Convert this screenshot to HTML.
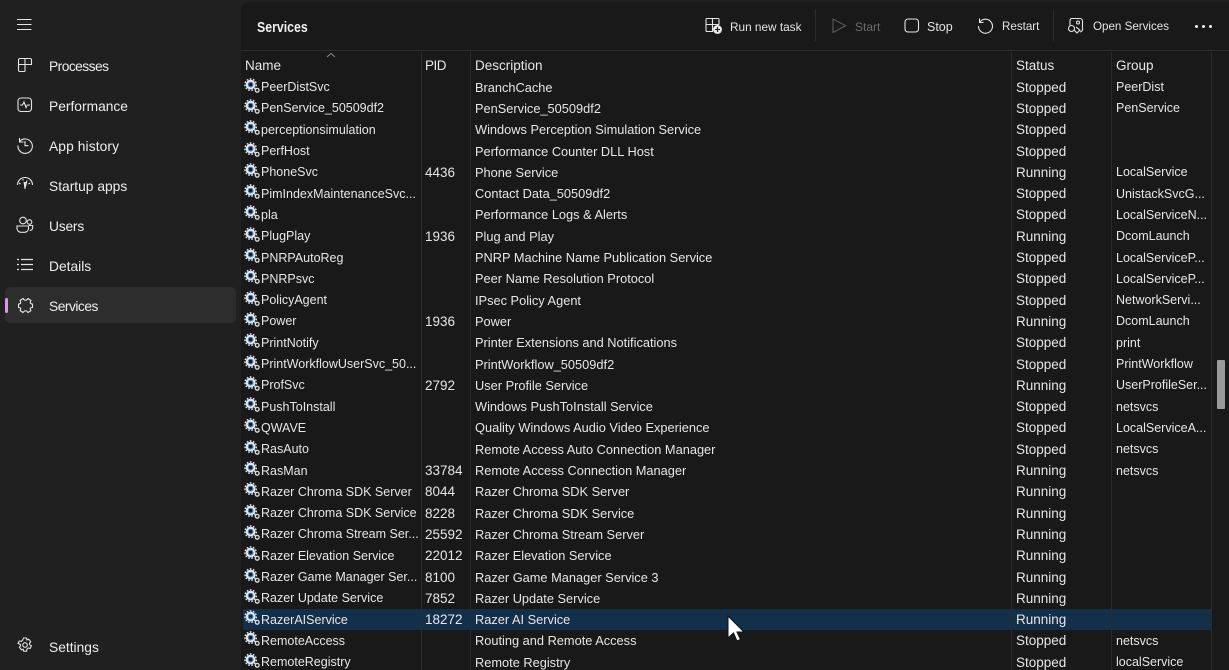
<!DOCTYPE html>
<html><head><meta charset="utf-8"><style>
html,body{margin:0;padding:0;width:1229px;height:670px;overflow:hidden;background:#202020;color:#e6e6e6;font-family:"Liberation Sans",sans-serif;font-size:13.5px}
.abs,.nav,.tb,.ic{position:absolute}
#main{position:absolute;left:241px;top:2px;width:988px;height:668px;background:#191919;border-top-left-radius:8px;overflow:hidden}
.nav{left:49px;font-size:13.800px;color:#eee;line-height:20px;white-space:nowrap;margin-top:1px}
.ic{fill:none;stroke:#e4e4e4;stroke-width:1.1}
.tb{top:16.500px;line-height:20px;white-space:nowrap;font-size:12px;color:#e4e4e4}
#rows{position:absolute;left:241px;top:76.700px;width:970px;height:593.300px;overflow:hidden}
.r{position:relative;height:21.3px;line-height:21.3px;white-space:nowrap}
.r span{position:absolute;top:0;white-space:nowrap}
.r svg{position:absolute;left:3px;top:0}
.n{font-size:12.500px}.d{font-size:12.800px}.g{font-size:12.500px}
.r span.n,.r span.g{top:.5px}
.n{left:20px}.p{left:184px}.d{left:234px}.s{left:775px}.g{left:875px}
.sel{background:linear-gradient(#12304a,#12304a) 2px 0/968px 100% no-repeat}
.sep{position:absolute;width:1px;background:#2b2b2b}
.hd{position:absolute;top:56px;line-height:20px;color:#e6e6e6}
</style></head><body>
<svg width="0" height="0" style="position:absolute"><symbol id="gg" viewBox="0 0 18 18"><g fill="none" stroke="#dfeaf5" stroke-width="2.2"><circle cx="7" cy="7" r="4"/></g><g fill="none" stroke="#dfeaf5" stroke-width="1.5" stroke-dasharray="1.8 1.6"><circle cx="7" cy="7" r="6"/></g><circle cx="7" cy="7" r="2.3" fill="none" stroke="#3f86c8" stroke-width="1"/><circle cx="14" cy="13" r="2" fill="none" stroke="#d5dde5" stroke-width="1.4"/></symbol></svg>

<svg class="ic" style="left:16px;top:18px" width="17" height="13"><path d="M1 1.5h14.5M1 6.500h14.500M1 11.500h14.500"/></svg>
<svg class="ic" style="left:17px;top:57px" width="16" height="16"><path d="M1.500 3a1.500 1.500 0 0 1 1.500-1.500h10a1.500 1.500 0 0 1 1.500 1.500v4.500H1.500zM8 1.500v13M1.500 7.500v5.500a1.500 1.500 0 0 0 1.500 1.500h5"/></svg>
<div class="nav" style="top:56px;letter-spacing:-.55px">Processes</div>
<svg class="ic" style="left:17px;top:97px" width="16" height="16"><rect x="1" y="1" width="13.500" height="13.500" rx="3"/><path d="M3 8h2.500l1.500-3 2 5.500 1.200-2.500H13"/></svg>
<div class="nav" style="top:96px">Performance</div>
<svg class="ic" style="left:16px;top:136px" width="18" height="18"><path d="M3.500 2v4h4M3.700 5.500A7.200 7.200 0 1 1 2 9.500M9 5v4.700h3.500"/></svg>
<div class="nav" style="top:136px;letter-spacing:.1px">App history</div>
<svg class="ic" style="left:16px;top:177px" width="18" height="14"><path d="M1.500 8A7.500 7.500 0 0 1 16.500 8M3 6l1.500 1M7 2v1.500M14 6l-1.500 1M11 3.500 8.800 12"/><path d="M7.500 5 10.500 5 9.500 11.500 8.500 11.500Z" fill="#e4e4e4" stroke="none"/></svg>
<div class="nav" style="top:176px">Startup apps</div>
<svg class="ic" style="left:16px;top:216px" width="18" height="18"><circle cx="7" cy="4.500" r="3.300"/><circle cx="13.500" cy="6" r="2.300"/><path d="M1 10h11.500v2.500a4 4 0 0 1-4 3.800H5a4 4 0 0 1-4-3.800zM13 9.500h3.700v2a3 3 0 0 1-3 3"/></svg>
<div class="nav" style="top:216px;letter-spacing:-.2px">Users</div>
<svg class="ic" style="left:16px;top:258px" width="18" height="15"><path d="M5 1.500h12M5 6.500h12M5 11.500h12M1 1.500h2M1 6.500h2M1 11.500h2" stroke-width="1.200"/></svg>
<div class="nav" style="top:256px">Details</div>
<div class="abs" style="left:5px;top:287px;width:231px;height:36px;background:#2d2d2d;border-radius:5px"></div>
<div class="abs" style="left:5px;top:298px;width:3px;height:15px;background:#d59ae0;border-radius:2px"></div>
<svg class="ic" style="left:17px;top:297px;stroke-linejoin:round" width="17" height="17"><path d="M6 1.500Q8.500 5 11 1.500L14 3.500Q12 7 15.500 7L15.500 10.500Q12 10.500 14 13.500L11 15.500Q8.500 12 6 15.500L3 13.500Q5 10.500 1.500 10.500L1.500 7Q5 7 3 3.500Z"/></svg>
<div class="nav" style="top:296px;letter-spacing:-.5px">Services</div>
<svg class="ic" style="left:17px;top:637px" width="16" height="16"><circle cx="8" cy="8" r="2.300"/><path d="M6.500 1h3l.4 2 1.800-.8 2 2.600-1.300 1.500.3 1.500 1.700 1-1.300 2.700-2-.5-1.200 1.200-.3 2h-3l-.5-2-1.700.6-2-2.500 1.200-1.400-.3-1.600L1 6.500 2.300 4l2 .4L5.800 3z"/></svg>
<div class="nav" style="top:637px">Settings</div>

<div id="main"></div>
<div class="abs" style="left:241px;top:50px;width:988px;height:1px;background:#2e2e2e"></div>
<div class="abs" style="left:257px;top:17.500px;font-size:14.500px;line-height:20px;font-weight:bold;color:#f0f0f0;transform:scaleX(.85);transform-origin:left">Services</div>

<svg class="ic" style="left:705px;top:17px" width="18" height="18"><path d="M2 1.500h11a1 1 0 0 1 1 1v5M1 2.500a1 1 0 0 1 1-1M1 2.500v11a1 1 0 0 0 1 1h6M1 7.500h13M7.500 1.500v13"/><circle cx="12.500" cy="12.500" r="4.500" fill="#e8e8e8" stroke="none"/><path d="M12.500 10v5M10 12.500h5" stroke="#191919"/></svg>
<div class="tb" style="left:730px;font-size:11.800px">Run new task</div>
<div class="abs" style="left:815px;top:9px;width:1px;height:32px;background:#2c2c2c"></div>
<svg class="ic" style="left:831px;top:17px;stroke:#5a5a5a" width="16" height="18"><path d="M2 2v13.500L14.500 8.700z"/></svg>
<div class="tb" style="left:855px;color:#6a6a6a">Start</div>
<svg class="ic" style="left:904px;top:18px" width="16" height="15"><rect x="1" y="1" width="13.500" height="13" rx="3"/></svg>
<div class="tb" style="left:927px;font-size:12.500px">Stop</div>
<svg class="ic" style="left:977px;top:17px" width="17" height="17"><path d="M2.500 1.500v4h4M2.700 5.300A7 7 0 1 1 1.500 9"/></svg>
<div class="tb" style="left:1002px;font-size:11.600px">Restart</div>
<div class="abs" style="left:1053px;top:9px;width:1px;height:32px;background:#2c2c2c"></div>
<svg class="ic" style="left:1067px;top:17px" width="18" height="18"><path d="M3 9V3.500A2 2 0 0 1 5 1.500h8a2.500 2.500 0 0 1 2.500 2.500v7a3 3 0 0 1-2.500 4"/><circle cx="4.500" cy="11.500" r="3"/><circle cx="11" cy="5.500" r="1.500"/><path d="M7 13l3 3 3-3-4-3"/></svg>
<div class="tb" style="left:1093px;font-size:11.600px">Open Services</div>
<div class="abs" style="left:1195px;top:25px;width:3px;height:3px;background:#eee;border-radius:50%;box-shadow:7px 0 #eee,14px 0 #eee"></div>

<svg class="abs" style="left:326px;top:52px" width="10" height="6"><path d="M1 5l4-3.500L9 5" fill="none" stroke="#8a8a8a"/></svg>
<div class="hd" style="left:245px">Name</div>
<div class="hd" style="left:425px;letter-spacing:-.5px">PID</div>
<div class="hd" style="left:475px">Description</div>
<div class="hd" style="left:1016px">Status</div>
<div class="hd" style="left:1116px">Group</div>

<div id="rows">
<div class="r"><svg width="17" height="17" style="top:1px"><use href="#gg"/></svg><span class="n">PeerDistSvc</span><span class="d">BranchCache</span><span class="s">Stopped</span><span class="g">PeerDist</span></div>
<div class="r"><svg width="17" height="17" style="top:1px"><use href="#gg"/></svg><span class="n">PenService_50509df2</span><span class="d">PenService_50509df2</span><span class="s">Stopped</span><span class="g">PenService</span></div>
<div class="r"><svg width="17" height="17" style="top:1px"><use href="#gg"/></svg><span class="n">perceptionsimulation</span><span class="d">Windows Perception Simulation Service</span><span class="s">Stopped</span></div>
<div class="r"><svg width="17" height="17" style="top:1px"><use href="#gg"/></svg><span class="n">PerfHost</span><span class="d">Performance Counter DLL Host</span><span class="s">Stopped</span></div>
<div class="r"><svg width="17" height="17" style="top:1px"><use href="#gg"/></svg><span class="n">PhoneSvc</span><span class="p">4436</span><span class="d">Phone Service</span><span class="s">Running</span><span class="g">LocalService</span></div>
<div class="r"><svg width="17" height="17" style="top:1px"><use href="#gg"/></svg><span class="n">PimIndexMaintenanceSvc...</span><span class="d">Contact Data_50509df2</span><span class="s">Stopped</span><span class="g">UnistackSvcG...</span></div>
<div class="r"><svg width="17" height="17" style="top:1px"><use href="#gg"/></svg><span class="n">pla</span><span class="d">Performance Logs &amp; Alerts</span><span class="s">Stopped</span><span class="g">LocalServiceN...</span></div>
<div class="r"><svg width="17" height="17" style="top:1px"><use href="#gg"/></svg><span class="n">PlugPlay</span><span class="p">1936</span><span class="d">Plug and Play</span><span class="s">Running</span><span class="g">DcomLaunch</span></div>
<div class="r"><svg width="17" height="17" style="top:1px"><use href="#gg"/></svg><span class="n">PNRPAutoReg</span><span class="d">PNRP Machine Name Publication Service</span><span class="s">Stopped</span><span class="g">LocalServiceP...</span></div>
<div class="r"><svg width="17" height="17" style="top:1px"><use href="#gg"/></svg><span class="n">PNRPsvc</span><span class="d">Peer Name Resolution Protocol</span><span class="s">Stopped</span><span class="g">LocalServiceP...</span></div>
<div class="r"><svg width="17" height="17" style="top:1px"><use href="#gg"/></svg><span class="n">PolicyAgent</span><span class="d">IPsec Policy Agent</span><span class="s">Stopped</span><span class="g">NetworkServi...</span></div>
<div class="r"><svg width="17" height="17" style="top:1px"><use href="#gg"/></svg><span class="n">Power</span><span class="p">1936</span><span class="d">Power</span><span class="s">Running</span><span class="g">DcomLaunch</span></div>
<div class="r"><svg width="17" height="17" style="top:1px"><use href="#gg"/></svg><span class="n">PrintNotify</span><span class="d">Printer Extensions and Notifications</span><span class="s">Stopped</span><span class="g">print</span></div>
<div class="r"><svg width="17" height="17" style="top:1px"><use href="#gg"/></svg><span class="n">PrintWorkflowUserSvc_50...</span><span class="d">PrintWorkflow_50509df2</span><span class="s">Stopped</span><span class="g">PrintWorkflow</span></div>
<div class="r"><svg width="17" height="17" style="top:1px"><use href="#gg"/></svg><span class="n">ProfSvc</span><span class="p">2792</span><span class="d">User Profile Service</span><span class="s">Running</span><span class="g">UserProfileSer...</span></div>
<div class="r"><svg width="17" height="17" style="top:1px"><use href="#gg"/></svg><span class="n">PushToInstall</span><span class="d">Windows PushToInstall Service</span><span class="s">Stopped</span><span class="g">netsvcs</span></div>
<div class="r"><svg width="17" height="17" style="top:1px"><use href="#gg"/></svg><span class="n">QWAVE</span><span class="d">Quality Windows Audio Video Experience</span><span class="s">Stopped</span><span class="g">LocalServiceA...</span></div>
<div class="r"><svg width="17" height="17" style="top:1px"><use href="#gg"/></svg><span class="n">RasAuto</span><span class="d">Remote Access Auto Connection Manager</span><span class="s">Stopped</span><span class="g">netsvcs</span></div>
<div class="r"><svg width="17" height="17" style="top:1px"><use href="#gg"/></svg><span class="n">RasMan</span><span class="p">33784</span><span class="d">Remote Access Connection Manager</span><span class="s">Running</span><span class="g">netsvcs</span></div>
<div class="r"><svg width="17" height="17" style="top:1px"><use href="#gg"/></svg><span class="n">Razer Chroma SDK Server</span><span class="p">8044</span><span class="d">Razer Chroma SDK Server</span><span class="s">Running</span></div>
<div class="r"><svg width="17" height="17" style="top:1px"><use href="#gg"/></svg><span class="n">Razer Chroma SDK Service</span><span class="p">8228</span><span class="d">Razer Chroma SDK Service</span><span class="s">Running</span></div>
<div class="r"><svg width="17" height="17" style="top:1px"><use href="#gg"/></svg><span class="n">Razer Chroma Stream Ser...</span><span class="p">25592</span><span class="d">Razer Chroma Stream Server</span><span class="s">Running</span></div>
<div class="r"><svg width="17" height="17" style="top:1px"><use href="#gg"/></svg><span class="n">Razer Elevation Service</span><span class="p">22012</span><span class="d">Razer Elevation Service</span><span class="s">Running</span></div>
<div class="r"><svg width="17" height="17" style="top:1px"><use href="#gg"/></svg><span class="n">Razer Game Manager Ser...</span><span class="p">8100</span><span class="d">Razer Game Manager Service 3</span><span class="s">Running</span></div>
<div class="r"><svg width="17" height="17" style="top:1px"><use href="#gg"/></svg><span class="n">Razer Update Service</span><span class="p">7852</span><span class="d">Razer Update Service</span><span class="s">Running</span></div>
<div class="r sel"><svg width="17" height="17" style="top:1px"><use href="#gg"/></svg><span class="n">RazerAIService</span><span class="p">18272</span><span class="d">Razer AI Service</span><span class="s">Running</span></div>
<div class="r"><svg width="17" height="17" style="top:1px"><use href="#gg"/></svg><span class="n">RemoteAccess</span><span class="d">Routing and Remote Access</span><span class="s">Stopped</span><span class="g">netsvcs</span></div>
<div class="r"><svg width="17" height="17" style="top:1px"><use href="#gg"/></svg><span class="n">RemoteRegistry</span><span class="d">Remote Registry</span><span class="s">Stopped</span><span class="g">localService</span></div>
</div>

<div class="sep" style="left:421px;top:52px;height:618px"></div>
<div class="sep" style="left:470px;top:52px;height:618px"></div>
<div class="sep" style="left:1011px;top:52px;height:618px"></div>
<div class="sep" style="left:1111px;top:52px;height:618px"></div>
<div class="sep" style="left:1211px;top:52px;height:618px"></div>
<div class="abs" style="left:1217px;top:360px;width:8px;height:49px;background:#9b9b9b;border-radius:1px"></div>
<svg class="abs" style="left:726px;top:614px" width="22" height="30"><path d="M2 2v22l5.500-5 3.500 8 3.500-1.500-3.500-7.500h7z" fill="#fff" stroke="#111"/></svg>
</body></html>
